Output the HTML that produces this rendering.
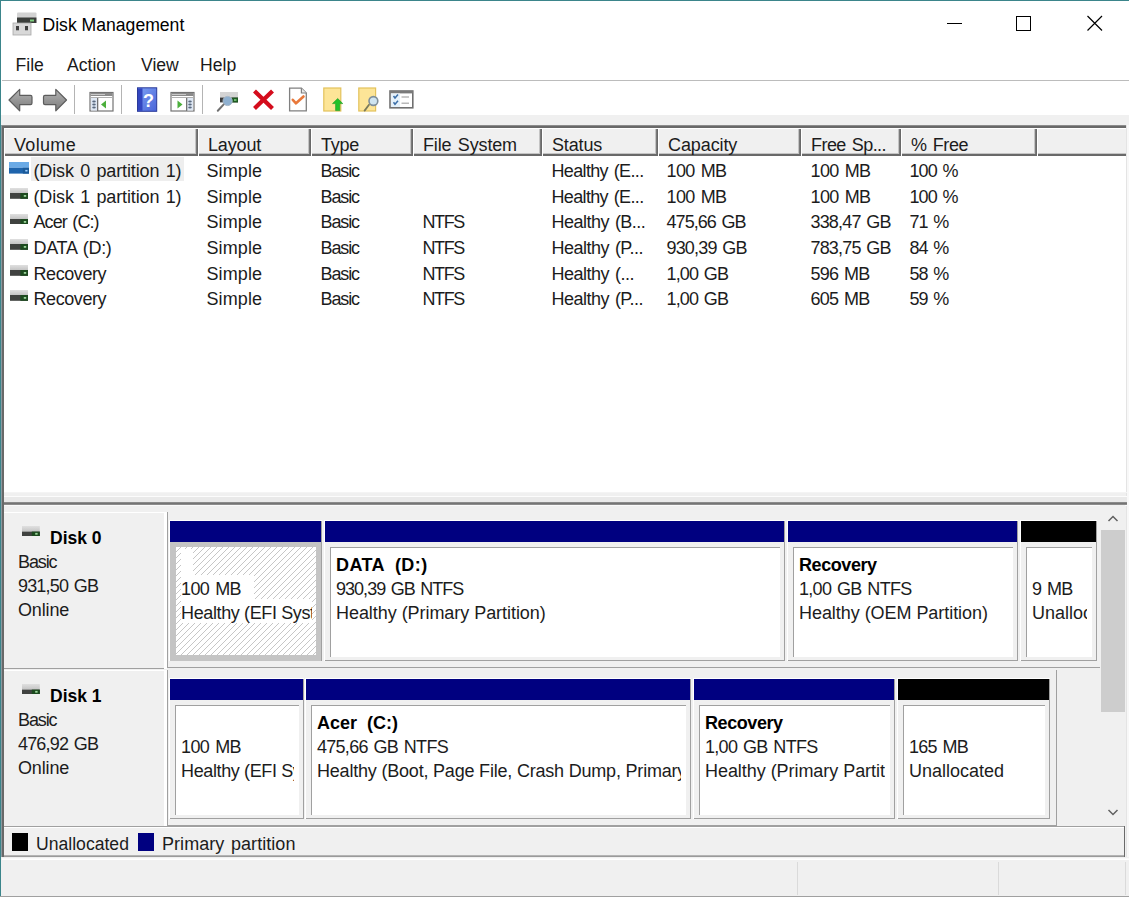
<!DOCTYPE html>
<html><head><meta charset="utf-8">
<style>
*{box-sizing:border-box;margin:0;padding:0}
html,body{width:1129px;height:897px;overflow:hidden;background:#f0f0f0;font-family:"Liberation Sans",sans-serif;color:#000;position:relative}
.a{position:absolute}
.t{position:absolute;white-space:pre;line-height:22px}
.clip{position:absolute;overflow:hidden}
</style></head><body>
<div class="a" style="left:0px;top:0px;width:1129px;height:1px;background:#3b858b;"></div>
<div class="a" style="left:0px;top:0px;width:1px;height:897px;background:#3b858b;"></div>
<div class="a" style="left:1px;top:1px;width:1128px;height:114px;background:#fff;"></div>
<div class="t" style="left:42.5px;top:13.90px;font-size:17.6px;color:#000;letter-spacing:0.000px;word-spacing:0px;">Disk Management</div>
<svg class="a" style="left:940px;top:10px" width="180" height="30"><line x1="7" y1="13.5" x2="22" y2="13.5" stroke="#000" stroke-width="1"/><rect x="76.5" y="6.5" width="14" height="14" fill="none" stroke="#000" stroke-width="1"/><path d="M147.5 6 L162 20.5 M162 6 L147.5 20.5" stroke="#000" stroke-width="1.2"/></svg>
<div class="t" style="left:15.5px;top:53.90px;font-size:17.6px;color:#1a1a1a;letter-spacing:0.000px;word-spacing:0px;">File</div>
<div class="t" style="left:67px;top:53.90px;font-size:17.6px;color:#1a1a1a;letter-spacing:0.000px;word-spacing:0px;">Action</div>
<div class="t" style="left:141px;top:53.90px;font-size:17.6px;color:#1a1a1a;letter-spacing:0.000px;word-spacing:0px;">View</div>
<div class="t" style="left:200px;top:53.90px;font-size:17.6px;color:#1a1a1a;letter-spacing:0.000px;word-spacing:0px;">Help</div>
<div class="a" style="left:2px;top:80px;width:1127px;height:1px;background:#bcbcbc;"></div>
<div class="a" style="left:74px;top:85px;width:1px;height:29px;background:#b4b4b4;"></div>
<div class="a" style="left:121px;top:85px;width:1px;height:29px;background:#b4b4b4;"></div>
<div class="a" style="left:202px;top:85px;width:1px;height:29px;background:#b4b4b4;"></div>
<svg class="a" style="left:0;top:0" width="430" height="120">
<defs>
<linearGradient id="ag" x1="0" y1="0" x2="0" y2="1"><stop offset="0" stop-color="#b4b4b4"/><stop offset="1" stop-color="#7a7a7a"/></linearGradient>
<linearGradient id="hb" x1="0" y1="0" x2="1" y2="1"><stop offset="0" stop-color="#7ea2f4"/><stop offset="1" stop-color="#4a64d8"/></linearGradient>
</defs>
<!-- back -->
<path d="M9 100 L19.7 89.3 L19.7 95.3 L30.5 95.3 Q32 95.3 32 97 L32 103 Q32 104.6 30.5 104.6 L19.7 104.6 L19.7 110.8 Z" fill="url(#ag)" stroke="#5c5c5c" stroke-width="1.2" stroke-linejoin="round"/>
<!-- forward -->
<path d="M66.5 100 L55.8 89.3 L55.8 95.3 L45 95.3 Q43.5 95.3 43.5 97 L43.5 103 Q43.5 104.6 45 104.6 L55.8 104.6 L55.8 110.8 Z" fill="url(#ag)" stroke="#5c5c5c" stroke-width="1.2" stroke-linejoin="round"/>
<!-- console tree -->
<rect x="90" y="92.5" width="23" height="18.5" fill="#fff" stroke="#737373" stroke-width="1.2"/>
<rect x="90.5" y="93" width="22" height="3" fill="#8a8a8a"/>
<rect x="91" y="94" width="14" height="1" fill="#c8c8c8"/>
<rect x="90.5" y="97" width="22" height="1" fill="#b0b0b0"/>
<rect x="91" y="98" width="6" height="12.5" fill="#dfe8f4"/>
<rect x="97" y="98" width="1.3" height="13" fill="#737373"/>
<ellipse cx="94" cy="101.5" rx="1.8" ry="0.9" fill="#5a6a80"/>
<ellipse cx="94" cy="104.5" rx="1.8" ry="0.9" fill="#5a6a80"/>
<ellipse cx="94" cy="107.5" rx="1.8" ry="0.9" fill="#5a6a80"/>
<path d="M101 104.5 L106 100.5 L106 108.5 Z" fill="#4caf3c"/>
<!-- help -->
<rect x="137.5" y="87.8" width="19.2" height="23.5" fill="url(#hb)" stroke="#2a3a9a" stroke-width="1"/>
<rect x="138" y="88.3" width="4.5" height="22.5" fill="#3346c0"/>
<text x="148.5" y="106.5" font-family="Liberation Sans" font-weight="bold" font-size="18" fill="#fff" text-anchor="middle">?</text>
<!-- action pane -->
<rect x="171" y="92.5" width="23" height="18.5" fill="#fff" stroke="#737373" stroke-width="1.2"/>
<rect x="171.5" y="93" width="22" height="3" fill="#8a8a8a"/>
<rect x="172" y="94" width="14" height="1" fill="#c8c8c8"/>
<rect x="171.5" y="97" width="22" height="1" fill="#b0b0b0"/>
<rect x="187" y="98" width="6" height="12.5" fill="#dfe8f4"/>
<rect x="186" y="98" width="1.3" height="13" fill="#737373"/>
<ellipse cx="190" cy="101.5" rx="1.8" ry="0.9" fill="#5a6a80"/>
<ellipse cx="190" cy="104.5" rx="1.8" ry="0.9" fill="#5a6a80"/>
<ellipse cx="190" cy="107.5" rx="1.8" ry="0.9" fill="#5a6a80"/>
<path d="M182.5 104.5 L177.5 100.5 L177.5 108.5 Z" fill="#4caf3c"/>
<!-- disk + magnifier -->
<rect x="220" y="92" width="18" height="6" fill="#d4d4d4"/>
<rect x="220" y="97.6" width="18" height="4.8" fill="#3c3c3c"/>
<rect x="232" y="97.6" width="6" height="4.8" fill="#1f5a22"/>
<rect x="234" y="99.3" width="2.5" height="1.4" fill="#8fe08f"/>
<circle cx="227.6" cy="101" r="4.6" fill="#8eb0d0" stroke="#a8b8c8" stroke-width="1"/>
<line x1="223.5" y1="104.6" x2="217.8" y2="110.8" stroke="#707070" stroke-width="2" stroke-linecap="round"/>
<!-- red X -->
<path d="M254.5 91 L272.5 108.5 M272.5 91 L254.5 108.5" stroke="#d40c1c" stroke-width="4.2"/>
<!-- check doc -->
<path d="M289.6 88.2 L301.4 88.2 L306.3 93 L306.3 110.8 L289.6 110.8 Z" fill="#fff" stroke="#808080" stroke-width="1.3"/>
<path d="M301.4 88.2 L301.4 93 L306.3 93" fill="#e8e8e8" stroke="#808080" stroke-width="1.2"/>
<path d="M292.8 99.8 L296 103.3 L303.5 96.5" fill="none" stroke="#e8783a" stroke-width="2.6" stroke-linecap="round" stroke-linejoin="round"/>
<!-- folder up -->
<rect x="323.8" y="88" width="17" height="23" fill="#fde597" stroke="#e3c25c" stroke-width="1.2"/>
<path d="M337.7 98.5 L342.8 103.6 L339.8 103.6 L339.8 110.6 L335.6 110.6 L335.6 103.6 L332.5 103.6 Z" fill="#22c22a" stroke="#1a9a20" stroke-width="0.6"/>
<!-- folder search -->
<rect x="358.8" y="88" width="16.8" height="23" fill="#fde597" stroke="#e3c25c" stroke-width="1.2"/>
<line x1="369" y1="104.8" x2="364.6" y2="110.6" stroke="#7a7a5a" stroke-width="1.8" stroke-linecap="round"/>
<circle cx="373.4" cy="101" r="4.4" fill="#cfe4f0" stroke="#7f8f9a" stroke-width="1.6"/>
<!-- checklist -->
<rect x="390" y="91" width="22.8" height="16.8" fill="#fff" stroke="#707070" stroke-width="1.6"/>
<rect x="390" y="91" width="22.8" height="2.4" fill="#7a7a7a"/>
<rect x="391" y="93.5" width="9" height="13.5" fill="#e6f2fb"/>
<path d="M393.5 96 L395 98 L398 94.6 M393.5 102.2 L395 104.2 L398 100.8" fill="none" stroke="#3a6ea8" stroke-width="1.5"/>
<rect x="401.5" y="96.4" width="7.5" height="1.2" fill="#a8a8a8"/>
<rect x="401.5" y="102.6" width="7.5" height="1.2" fill="#a8a8a8"/>
<!-- title icon -->
<rect x="17" y="12.5" width="19.5" height="5.5" rx="1" fill="#d2d2d2"/>
<rect x="17" y="17.5" width="19.5" height="5.5" fill="#3a3d3a"/>
<rect x="30" y="19.5" width="4" height="2" fill="#7fd07f"/>
<rect x="13" y="23" width="18" height="12" fill="#d8d8d8" stroke="#a8a8a8" stroke-width="0.8"/>
<rect x="16" y="26" width="3" height="4.3" fill="#404040"/>
<rect x="25" y="26" width="3" height="4.3" fill="#404040"/>
</svg>
<div class="a" style="left:1px;top:125px;width:1126px;height:1px;background:#8c8c8c;"></div>
<div class="a" style="left:2px;top:126px;width:1125px;height:2px;background:#696969;"></div>
<div class="a" style="left:1px;top:125px;width:1px;height:732px;background:#8c9aa0;"></div>
<div class="a" style="left:2px;top:126px;width:2px;height:731px;background:#696969;"></div>
<div class="a" style="left:4px;top:128px;width:1122px;height:364px;background:#fff;"></div>
<div class="a" style="left:1126px;top:125px;width:1px;height:732px;background:#e4e4e4;"></div>
<div class="a" style="left:1127px;top:125px;width:2px;height:732px;background:#f8f8f8;"></div>
<div class="a" style="left:4px;top:128px;width:194px;height:28px;background:#f0f0f0;box-shadow:inset 1px 1px 0 #fff, inset -1px -2px 0 #696969, inset -2px 0 0 #7a7a7a, inset -3px -3px 0 #c4c4c4"></div>
<div class="t" style="left:14px;top:133.76px;font-size:18px;color:#1c1c1c;letter-spacing:0.320px;word-spacing:0px;">Volume</div>
<div class="a" style="left:198px;top:128px;width:113px;height:28px;background:#f0f0f0;box-shadow:inset 1px 1px 0 #fff, inset -1px -2px 0 #696969, inset -2px 0 0 #7a7a7a, inset -3px -3px 0 #c4c4c4"></div>
<div class="t" style="left:208px;top:133.76px;font-size:18px;color:#1c1c1c;letter-spacing:-0.140px;word-spacing:0px;">Layout</div>
<div class="a" style="left:311px;top:128px;width:102px;height:28px;background:#f0f0f0;box-shadow:inset 1px 1px 0 #fff, inset -1px -2px 0 #696969, inset -2px 0 0 #7a7a7a, inset -3px -3px 0 #c4c4c4"></div>
<div class="t" style="left:321px;top:133.76px;font-size:18px;color:#1c1c1c;letter-spacing:-0.233px;word-spacing:0px;">Type</div>
<div class="a" style="left:413px;top:128px;width:129px;height:28px;background:#f0f0f0;box-shadow:inset 1px 1px 0 #fff, inset -1px -2px 0 #696969, inset -2px 0 0 #7a7a7a, inset -3px -3px 0 #c4c4c4"></div>
<div class="t" style="left:423px;top:133.76px;font-size:18px;color:#1c1c1c;letter-spacing:-0.140px;word-spacing:1.5px;">File System</div>
<div class="a" style="left:542px;top:128px;width:116px;height:28px;background:#f0f0f0;box-shadow:inset 1px 1px 0 #fff, inset -1px -2px 0 #696969, inset -2px 0 0 #7a7a7a, inset -3px -3px 0 #c4c4c4"></div>
<div class="t" style="left:552px;top:133.76px;font-size:18px;color:#1c1c1c;letter-spacing:-0.140px;word-spacing:0px;">Status</div>
<div class="a" style="left:658px;top:128px;width:143px;height:28px;background:#f0f0f0;box-shadow:inset 1px 1px 0 #fff, inset -1px -2px 0 #696969, inset -2px 0 0 #7a7a7a, inset -3px -3px 0 #c4c4c4"></div>
<div class="t" style="left:668px;top:133.76px;font-size:18px;color:#1c1c1c;letter-spacing:-0.100px;word-spacing:0px;">Capacity</div>
<div class="a" style="left:801px;top:128px;width:100px;height:28px;background:#f0f0f0;box-shadow:inset 1px 1px 0 #fff, inset -1px -2px 0 #696969, inset -2px 0 0 #7a7a7a, inset -3px -3px 0 #c4c4c4"></div>
<div class="t" style="left:811px;top:133.76px;font-size:18px;color:#1c1c1c;letter-spacing:-0.556px;word-spacing:1.5px;">Free Sp...</div>
<div class="a" style="left:901px;top:128px;width:136px;height:28px;background:#f0f0f0;box-shadow:inset 1px 1px 0 #fff, inset -1px -2px 0 #696969, inset -2px 0 0 #7a7a7a, inset -3px -3px 0 #c4c4c4"></div>
<div class="t" style="left:911px;top:133.76px;font-size:18px;color:#1c1c1c;letter-spacing:-0.380px;word-spacing:1.5px;">% Free</div>
<div class="a" style="left:1037px;top:128px;width:89px;height:28px;background:#f0f0f0;box-shadow:inset 1px 1px 0 #fff, inset 0 -2px 0 #696969, inset 0 -3px 0 #c4c4c4"></div>
<div class="a" style="left:31px;top:157px;width:153px;height:24px;background:#eeeeee;"></div>
<div class="t" style="left:33.5px;top:159.76px;font-size:18px;color:#1c1c1c;letter-spacing:-0.132px;word-spacing:1.5px;">(Disk 0 partition 1)</div>
<div class="t" style="left:206.5px;top:159.76px;font-size:18px;color:#1c1c1c;letter-spacing:0.100px;word-spacing:0px;">Simple</div>
<div class="t" style="left:320.5px;top:159.76px;font-size:18px;color:#1c1c1c;letter-spacing:-1.125px;word-spacing:0px;">Basic</div>
<div class="t" style="left:551.5px;top:159.76px;font-size:18px;color:#1c1c1c;letter-spacing:-0.658px;word-spacing:1.5px;">Healthy (E...</div>
<div class="t" style="left:666.5px;top:159.76px;font-size:18px;color:#1c1c1c;letter-spacing:-0.600px;word-spacing:1.5px;">100 MB</div>
<div class="t" style="left:810.5px;top:159.76px;font-size:18px;color:#1c1c1c;letter-spacing:-0.600px;word-spacing:1.5px;">100 MB</div>
<div class="t" style="left:909.5px;top:159.76px;font-size:18px;color:#1c1c1c;letter-spacing:-0.900px;word-spacing:1.5px;">100 %</div>
<svg class="a" style="left:8.6px;top:162.4px" width="20.8" height="11.6"><rect x="0" y="0" width="20.8" height="5.8" fill="#6aaae6"/><rect x="0" y="5.8" width="20.8" height="5.8" fill="#1e64ac"/><rect x="13.8" y="5.8" width="7" height="5.8" fill="#1a5a9a"/><rect x="16.3" y="7.8999999999999995" width="2.2" height="1.6" fill="#9fd0ff"/></svg>
<div class="t" style="left:33.5px;top:185.76px;font-size:18px;color:#1c1c1c;letter-spacing:-0.132px;word-spacing:1.5px;">(Disk 1 partition 1)</div>
<div class="t" style="left:206.5px;top:185.76px;font-size:18px;color:#1c1c1c;letter-spacing:0.100px;word-spacing:0px;">Simple</div>
<div class="t" style="left:320.5px;top:185.76px;font-size:18px;color:#1c1c1c;letter-spacing:-1.125px;word-spacing:0px;">Basic</div>
<div class="t" style="left:551.5px;top:185.76px;font-size:18px;color:#1c1c1c;letter-spacing:-0.658px;word-spacing:1.5px;">Healthy (E...</div>
<div class="t" style="left:666.5px;top:185.76px;font-size:18px;color:#1c1c1c;letter-spacing:-0.600px;word-spacing:1.5px;">100 MB</div>
<div class="t" style="left:810.5px;top:185.76px;font-size:18px;color:#1c1c1c;letter-spacing:-0.600px;word-spacing:1.5px;">100 MB</div>
<div class="t" style="left:909.5px;top:185.76px;font-size:18px;color:#1c1c1c;letter-spacing:-0.900px;word-spacing:1.5px;">100 %</div>
<svg class="a" style="left:9.8px;top:188.0px" width="18.4" height="10.8"><defs><linearGradient id="dg" x1="0" y1="0" x2="0" y2="1"><stop offset="0" stop-color="#e0e0e0"/><stop offset="1" stop-color="#c4c4c4"/></linearGradient></defs><rect x="0" y="0" width="18.4" height="5" fill="url(#dg)"/><rect x="0" y="5" width="18.4" height="5.8" fill="#404240"/><rect x="10.399999999999999" y="5" width="8" height="5.8" fill="#1c4a1e"/><rect x="13.799999999999999" y="7.0" width="2.4" height="1.8" fill="#9ad49a"/></svg>
<div class="t" style="left:33.5px;top:210.76px;font-size:18px;color:#1c1c1c;letter-spacing:-0.938px;word-spacing:1.5px;">Acer (C:)</div>
<div class="t" style="left:206.5px;top:210.76px;font-size:18px;color:#1c1c1c;letter-spacing:0.100px;word-spacing:0px;">Simple</div>
<div class="t" style="left:320.5px;top:210.76px;font-size:18px;color:#1c1c1c;letter-spacing:-1.125px;word-spacing:0px;">Basic</div>
<div class="t" style="left:422.5px;top:210.76px;font-size:18px;color:#1c1c1c;letter-spacing:-1.433px;word-spacing:0px;">NTFS</div>
<div class="t" style="left:551.5px;top:210.76px;font-size:18px;color:#1c1c1c;letter-spacing:-0.517px;word-spacing:1.5px;">Healthy (B...</div>
<div class="t" style="left:666.5px;top:210.76px;font-size:18px;color:#1c1c1c;letter-spacing:-0.938px;word-spacing:1.5px;">475,66 GB</div>
<div class="t" style="left:810.5px;top:210.76px;font-size:18px;color:#1c1c1c;letter-spacing:-0.825px;word-spacing:1.5px;">338,47 GB</div>
<div class="t" style="left:909.5px;top:210.76px;font-size:18px;color:#1c1c1c;letter-spacing:-0.933px;word-spacing:1.5px;">71 %</div>
<svg class="a" style="left:9.8px;top:213.6px" width="18.4" height="10.8"><defs><linearGradient id="dg" x1="0" y1="0" x2="0" y2="1"><stop offset="0" stop-color="#e0e0e0"/><stop offset="1" stop-color="#c4c4c4"/></linearGradient></defs><rect x="0" y="0" width="18.4" height="5" fill="url(#dg)"/><rect x="0" y="5" width="18.4" height="5.8" fill="#404240"/><rect x="10.399999999999999" y="5" width="8" height="5.8" fill="#1c4a1e"/><rect x="13.799999999999999" y="7.0" width="2.4" height="1.8" fill="#9ad49a"/></svg>
<div class="t" style="left:33.5px;top:236.76px;font-size:18px;color:#1c1c1c;letter-spacing:-0.312px;word-spacing:1.5px;">DATA (D:)</div>
<div class="t" style="left:206.5px;top:236.76px;font-size:18px;color:#1c1c1c;letter-spacing:0.100px;word-spacing:0px;">Simple</div>
<div class="t" style="left:320.5px;top:236.76px;font-size:18px;color:#1c1c1c;letter-spacing:-1.125px;word-spacing:0px;">Basic</div>
<div class="t" style="left:422.5px;top:236.76px;font-size:18px;color:#1c1c1c;letter-spacing:-1.433px;word-spacing:0px;">NTFS</div>
<div class="t" style="left:551.5px;top:236.76px;font-size:18px;color:#1c1c1c;letter-spacing:-0.517px;word-spacing:1.5px;">Healthy (P...</div>
<div class="t" style="left:666.5px;top:236.76px;font-size:18px;color:#1c1c1c;letter-spacing:-0.825px;word-spacing:1.5px;">930,39 GB</div>
<div class="t" style="left:810.5px;top:236.76px;font-size:18px;color:#1c1c1c;letter-spacing:-0.825px;word-spacing:1.5px;">783,75 GB</div>
<div class="t" style="left:909.5px;top:236.76px;font-size:18px;color:#1c1c1c;letter-spacing:-0.933px;word-spacing:1.5px;">84 %</div>
<svg class="a" style="left:9.8px;top:239.2px" width="18.4" height="10.8"><defs><linearGradient id="dg" x1="0" y1="0" x2="0" y2="1"><stop offset="0" stop-color="#e0e0e0"/><stop offset="1" stop-color="#c4c4c4"/></linearGradient></defs><rect x="0" y="0" width="18.4" height="5" fill="url(#dg)"/><rect x="0" y="5" width="18.4" height="5.8" fill="#404240"/><rect x="10.399999999999999" y="5" width="8" height="5.8" fill="#1c4a1e"/><rect x="13.799999999999999" y="7.0" width="2.4" height="1.8" fill="#9ad49a"/></svg>
<div class="t" style="left:33.5px;top:262.76px;font-size:18px;color:#1c1c1c;letter-spacing:-0.429px;word-spacing:0px;">Recovery</div>
<div class="t" style="left:206.5px;top:262.76px;font-size:18px;color:#1c1c1c;letter-spacing:0.100px;word-spacing:0px;">Simple</div>
<div class="t" style="left:320.5px;top:262.76px;font-size:18px;color:#1c1c1c;letter-spacing:-1.125px;word-spacing:0px;">Basic</div>
<div class="t" style="left:422.5px;top:262.76px;font-size:18px;color:#1c1c1c;letter-spacing:-1.433px;word-spacing:0px;">NTFS</div>
<div class="t" style="left:551.5px;top:262.76px;font-size:18px;color:#1c1c1c;letter-spacing:-0.500px;word-spacing:1.5px;">Healthy (...</div>
<div class="t" style="left:666.5px;top:262.76px;font-size:18px;color:#1c1c1c;letter-spacing:-0.833px;word-spacing:1.5px;">1,00 GB</div>
<div class="t" style="left:810.5px;top:262.76px;font-size:18px;color:#1c1c1c;letter-spacing:-0.760px;word-spacing:1.5px;">596 MB</div>
<div class="t" style="left:909.5px;top:262.76px;font-size:18px;color:#1c1c1c;letter-spacing:-0.933px;word-spacing:1.5px;">58 %</div>
<svg class="a" style="left:9.8px;top:264.8px" width="18.4" height="10.8"><defs><linearGradient id="dg" x1="0" y1="0" x2="0" y2="1"><stop offset="0" stop-color="#e0e0e0"/><stop offset="1" stop-color="#c4c4c4"/></linearGradient></defs><rect x="0" y="0" width="18.4" height="5" fill="url(#dg)"/><rect x="0" y="5" width="18.4" height="5.8" fill="#404240"/><rect x="10.399999999999999" y="5" width="8" height="5.8" fill="#1c4a1e"/><rect x="13.799999999999999" y="7.0" width="2.4" height="1.8" fill="#9ad49a"/></svg>
<div class="t" style="left:33.5px;top:287.76px;font-size:18px;color:#1c1c1c;letter-spacing:-0.429px;word-spacing:0px;">Recovery</div>
<div class="t" style="left:206.5px;top:287.76px;font-size:18px;color:#1c1c1c;letter-spacing:0.100px;word-spacing:0px;">Simple</div>
<div class="t" style="left:320.5px;top:287.76px;font-size:18px;color:#1c1c1c;letter-spacing:-1.125px;word-spacing:0px;">Basic</div>
<div class="t" style="left:422.5px;top:287.76px;font-size:18px;color:#1c1c1c;letter-spacing:-1.433px;word-spacing:0px;">NTFS</div>
<div class="t" style="left:551.5px;top:287.76px;font-size:18px;color:#1c1c1c;letter-spacing:-0.517px;word-spacing:1.5px;">Healthy (P...</div>
<div class="t" style="left:666.5px;top:287.76px;font-size:18px;color:#1c1c1c;letter-spacing:-0.833px;word-spacing:1.5px;">1,00 GB</div>
<div class="t" style="left:810.5px;top:287.76px;font-size:18px;color:#1c1c1c;letter-spacing:-0.760px;word-spacing:1.5px;">605 MB</div>
<div class="t" style="left:909.5px;top:287.76px;font-size:18px;color:#1c1c1c;letter-spacing:-0.933px;word-spacing:1.5px;">59 %</div>
<svg class="a" style="left:9.8px;top:290.4px" width="18.4" height="10.8"><defs><linearGradient id="dg" x1="0" y1="0" x2="0" y2="1"><stop offset="0" stop-color="#e0e0e0"/><stop offset="1" stop-color="#c4c4c4"/></linearGradient></defs><rect x="0" y="0" width="18.4" height="5" fill="url(#dg)"/><rect x="0" y="5" width="18.4" height="5.8" fill="#404240"/><rect x="10.399999999999999" y="5" width="8" height="5.8" fill="#1c4a1e"/><rect x="13.799999999999999" y="7.0" width="2.4" height="1.8" fill="#9ad49a"/></svg>
<div class="a" style="left:4px;top:492px;width:1123px;height:1px;background:#f4f4f4;"></div>
<div class="a" style="left:4px;top:496px;width:1123px;height:1px;background:#fcfcfc;"></div>
<div class="a" style="left:4px;top:497px;width:1123px;height:5px;background:#e9e9e9;"></div>
<div class="a" style="left:4px;top:502px;width:1123px;height:1px;background:#8a8a8a;"></div>
<div class="a" style="left:4px;top:503px;width:1123px;height:1px;background:#747474;"></div>
<div class="a" style="left:4px;top:504px;width:1123px;height:1px;background:#8c8c8c;"></div>
<div class="a" style="left:4px;top:505px;width:1123px;height:1px;background:#fafafa;"></div>
<div class="a" style="left:4px;top:512px;width:163px;height:157px;background:#f0f0f0;box-shadow:inset 0 1px 0 #fff, inset -3px 0 0 #fff, inset 0 -1px 0 #a0a0a0"></div>
<svg class="a" style="left:22.2px;top:526.1px" width="17.8" height="10.0"><defs><linearGradient id="dg" x1="0" y1="0" x2="0" y2="1"><stop offset="0" stop-color="#e0e0e0"/><stop offset="1" stop-color="#c4c4c4"/></linearGradient></defs><rect x="0" y="0" width="17.8" height="5.6" fill="url(#dg)"/><rect x="0" y="5.6" width="17.8" height="4.4" fill="#404240"/><rect x="9.8" y="5.6" width="8" height="4.4" fill="#1c4a1e"/><rect x="13.200000000000001" y="6.8999999999999995" width="2.4" height="1.8" fill="#9ad49a"/></svg>
<div class="t" style="left:50px;top:526.94px;font-size:17.5px;font-weight:bold;color:#000;letter-spacing:0.000px;word-spacing:0px;">Disk 0</div>
<div class="t" style="left:18px;top:550.76px;font-size:18px;color:#1c1c1c;letter-spacing:-1.125px;word-spacing:0px;">Basic</div>
<div class="t" style="left:18px;top:574.76px;font-size:18px;color:#1c1c1c;letter-spacing:-0.825px;word-spacing:1.5px;">931,50 GB</div>
<div class="t" style="left:18px;top:598.76px;font-size:18px;color:#1c1c1c;letter-spacing:-0.140px;word-spacing:0px;">Online</div>
<div class="a" style="left:167px;top:512px;width:1px;height:156px;background:#a0a0a0;"></div>
<div class="a" style="left:168px;top:667px;width:932px;height:1px;background:#a0a0a0;"></div>
<div class="a" style="left:169px;top:520px;width:153px;height:141px;background:#f0f0f0;box-shadow:inset 1px 1px 0 #fff, inset -1px -1px 0 #a0a0a0"></div>
<div class="a" style="left:170px;top:521px;width:151px;height:21px;background:#000080;"></div>
<div class="a" style="left:170px;top:542px;width:151px;height:119px;background:#c4c4c4;"></div>
<div class="a" style="left:176px;top:547px;width:140px;height:108px;background:repeating-linear-gradient(135deg,#fff 0 3.1px,#c6c6c6 3.1px 4.24px)"></div>
<div class="clip" style="left:175px;top:547px;width:137px;height:108px"><div class="a" style="left:6px;top:2px;width:12px;height:26px;background:#fff;"></div>
<div class="a" style="left:6px;top:28px;width:73px;height:24px;background:#fff;"></div>
<div class="a" style="left:6px;top:52px;width:138px;height:24px;background:#fff;"></div>
<div class="t" style="left:6px;top:30.96px;font-size:18px;color:#1c1c1c;letter-spacing:-0.600px;word-spacing:1.5px;">100 MB</div>
<div class="t" style="left:6px;top:54.66px;font-size:18px;color:#1c1c1c;letter-spacing:-0.370px;word-spacing:0px;">Healthy (EFI System Partition)</div>
</div>
<div class="a" style="left:324px;top:520px;width:461px;height:141px;background:#f0f0f0;box-shadow:inset 1px 1px 0 #fff, inset -1px -1px 0 #a0a0a0"></div>
<div class="a" style="left:325px;top:521px;width:459px;height:21px;background:#000080;"></div>
<div class="a" style="left:330px;top:547px;width:450px;height:110px;background:#fff;box-shadow:inset 1px 1px 0 #a0a0a0"></div>
<div class="clip" style="left:330px;top:547px;width:445px;height:108px"><div class="t" style="left:6px;top:7.26px;font-size:18px;font-weight:bold;color:#000;letter-spacing:0.389px;word-spacing:0px;">DATA  (D:)</div>
<div class="t" style="left:6px;top:30.96px;font-size:18px;color:#1c1c1c;letter-spacing:-0.977px;word-spacing:1.5px;">930,39 GB NTFS</div>
<div class="t" style="left:6px;top:54.66px;font-size:18px;color:#1c1c1c;letter-spacing:-0.050px;word-spacing:0px;">Healthy (Primary Partition)</div>
</div>
<div class="a" style="left:787px;top:520px;width:231px;height:141px;background:#f0f0f0;box-shadow:inset 1px 1px 0 #fff, inset -1px -1px 0 #a0a0a0"></div>
<div class="a" style="left:788px;top:521px;width:229px;height:21px;background:#000080;"></div>
<div class="a" style="left:793px;top:547px;width:220px;height:110px;background:#fff;box-shadow:inset 1px 1px 0 #a0a0a0"></div>
<div class="clip" style="left:793px;top:547px;width:215px;height:108px"><div class="t" style="left:6px;top:7.26px;font-size:18px;font-weight:bold;color:#000;letter-spacing:-0.429px;word-spacing:0px;">Recovery</div>
<div class="t" style="left:6px;top:30.96px;font-size:18px;color:#1c1c1c;letter-spacing:-0.709px;word-spacing:1.5px;">1,00 GB NTFS</div>
<div class="t" style="left:6px;top:54.66px;font-size:18px;color:#1c1c1c;letter-spacing:-0.050px;word-spacing:0px;">Healthy (OEM Partition)</div>
</div>
<div class="a" style="left:1020px;top:520px;width:77px;height:141px;background:#f0f0f0;box-shadow:inset 1px 1px 0 #fff, inset -1px -1px 0 #a0a0a0"></div>
<div class="a" style="left:1021px;top:521px;width:75px;height:21px;background:#000000;"></div>
<div class="a" style="left:1026px;top:547px;width:66px;height:110px;background:#fff;box-shadow:inset 1px 1px 0 #a0a0a0"></div>
<div class="clip" style="left:1026px;top:547px;width:61px;height:108px"><div class="t" style="left:6px;top:30.96px;font-size:18px;color:#1c1c1c;letter-spacing:-0.733px;word-spacing:1.5px;">9 MB</div>
<div class="t" style="left:6px;top:54.66px;font-size:18px;color:#1c1c1c;letter-spacing:0.000px;word-spacing:0px;">Unallocated</div>
</div>
<div class="a" style="left:4px;top:670px;width:163px;height:157px;background:#f0f0f0;box-shadow:inset 0 1px 0 #fff, inset -3px 0 0 #fff, inset 0 -1px 0 #a0a0a0"></div>
<svg class="a" style="left:22.2px;top:684.1px" width="17.8" height="10.0"><defs><linearGradient id="dg" x1="0" y1="0" x2="0" y2="1"><stop offset="0" stop-color="#e0e0e0"/><stop offset="1" stop-color="#c4c4c4"/></linearGradient></defs><rect x="0" y="0" width="17.8" height="5.6" fill="url(#dg)"/><rect x="0" y="5.6" width="17.8" height="4.4" fill="#404240"/><rect x="9.8" y="5.6" width="8" height="4.4" fill="#1c4a1e"/><rect x="13.200000000000001" y="6.8999999999999995" width="2.4" height="1.8" fill="#9ad49a"/></svg>
<div class="t" style="left:50px;top:684.94px;font-size:17.5px;font-weight:bold;color:#000;letter-spacing:0.000px;word-spacing:0px;">Disk 1</div>
<div class="t" style="left:18px;top:708.76px;font-size:18px;color:#1c1c1c;letter-spacing:-1.125px;word-spacing:0px;">Basic</div>
<div class="t" style="left:18px;top:732.76px;font-size:18px;color:#1c1c1c;letter-spacing:-0.825px;word-spacing:1.5px;">476,92 GB</div>
<div class="t" style="left:18px;top:756.76px;font-size:18px;color:#1c1c1c;letter-spacing:-0.140px;word-spacing:0px;">Online</div>
<div class="a" style="left:167px;top:670px;width:1px;height:156px;background:#a0a0a0;"></div>
<div class="a" style="left:168px;top:825px;width:889px;height:1px;background:#a0a0a0;"></div>
<div class="a" style="left:1056px;top:670px;width:1px;height:156px;background:#a0a0a0;"></div>
<div class="a" style="left:169px;top:678px;width:135px;height:141px;background:#f0f0f0;box-shadow:inset 1px 1px 0 #fff, inset -1px -1px 0 #a0a0a0"></div>
<div class="a" style="left:170px;top:679px;width:133px;height:21px;background:#000080;"></div>
<div class="a" style="left:175px;top:705px;width:124px;height:110px;background:#fff;box-shadow:inset 1px 1px 0 #a0a0a0"></div>
<div class="clip" style="left:175px;top:705px;width:119px;height:108px"><div class="t" style="left:6px;top:30.96px;font-size:18px;color:#1c1c1c;letter-spacing:-0.600px;word-spacing:1.5px;">100 MB</div>
<div class="t" style="left:6px;top:54.66px;font-size:18px;color:#1c1c1c;letter-spacing:-0.370px;word-spacing:0px;">Healthy (EFI System Partition)</div>
</div>
<div class="a" style="left:305px;top:678px;width:386px;height:141px;background:#f0f0f0;box-shadow:inset 1px 1px 0 #fff, inset -1px -1px 0 #a0a0a0"></div>
<div class="a" style="left:306px;top:679px;width:384px;height:21px;background:#000080;"></div>
<div class="a" style="left:311px;top:705px;width:375px;height:110px;background:#fff;box-shadow:inset 1px 1px 0 #a0a0a0"></div>
<div class="clip" style="left:311px;top:705px;width:370px;height:108px"><div class="t" style="left:6px;top:7.26px;font-size:18px;font-weight:bold;color:#000;letter-spacing:0.000px;word-spacing:0px;">Acer  (C:)</div>
<div class="t" style="left:6px;top:30.96px;font-size:18px;color:#1c1c1c;letter-spacing:-0.723px;word-spacing:1.5px;">475,66 GB NTFS</div>
<div class="t" style="left:6px;top:54.66px;font-size:18px;color:#1c1c1c;letter-spacing:-0.200px;word-spacing:0px;">Healthy (Boot, Page File, Crash Dump, Primary Partition)</div>
</div>
<div class="a" style="left:693px;top:678px;width:202px;height:141px;background:#f0f0f0;box-shadow:inset 1px 1px 0 #fff, inset -1px -1px 0 #a0a0a0"></div>
<div class="a" style="left:694px;top:679px;width:200px;height:21px;background:#000080;"></div>
<div class="a" style="left:699px;top:705px;width:191px;height:110px;background:#fff;box-shadow:inset 1px 1px 0 #a0a0a0"></div>
<div class="clip" style="left:699px;top:705px;width:186px;height:108px"><div class="t" style="left:6px;top:7.26px;font-size:18px;font-weight:bold;color:#000;letter-spacing:-0.429px;word-spacing:0px;">Recovery</div>
<div class="t" style="left:6px;top:30.96px;font-size:18px;color:#1c1c1c;letter-spacing:-0.709px;word-spacing:1.5px;">1,00 GB NTFS</div>
<div class="t" style="left:6px;top:54.66px;font-size:18px;color:#1c1c1c;letter-spacing:-0.050px;word-spacing:0px;">Healthy (Primary Partition)</div>
</div>
<div class="a" style="left:897px;top:678px;width:153px;height:141px;background:#f0f0f0;box-shadow:inset 1px 1px 0 #fff, inset -1px -1px 0 #a0a0a0"></div>
<div class="a" style="left:898px;top:679px;width:151px;height:21px;background:#000000;"></div>
<div class="a" style="left:903px;top:705px;width:142px;height:110px;background:#fff;box-shadow:inset 1px 1px 0 #a0a0a0"></div>
<div class="clip" style="left:903px;top:705px;width:137px;height:108px"><div class="t" style="left:6px;top:30.96px;font-size:18px;color:#1c1c1c;letter-spacing:-0.760px;word-spacing:1.5px;">165 MB</div>
<div class="t" style="left:6px;top:54.66px;font-size:18px;color:#1c1c1c;letter-spacing:0.000px;word-spacing:0px;">Unallocated</div>
</div>
<div class="a" style="left:1100px;top:505px;width:25px;height:321px;background:#f0f0f0;"></div>
<div class="a" style="left:1101px;top:530px;width:24px;height:182px;background:#cdcdcd;"></div>
<svg class="a" style="left:1101px;top:505px" width="24" height="320"><path d="M7.5 16 L12 11.5 L16.5 16" fill="none" stroke="#606060" stroke-width="1.5"/><path d="M7.5 305 L12 309.5 L16.5 305" fill="none" stroke="#606060" stroke-width="1.5"/></svg>
<div class="a" style="left:4px;top:826px;width:1121px;height:1px;background:#a0a0a0;"></div>
<div class="a" style="left:4px;top:827px;width:1121px;height:1px;background:#ffffff;"></div>
<div class="a" style="left:4px;top:855px;width:1121px;height:1px;background:#b4b4b4;"></div>
<div class="a" style="left:4px;top:856px;width:1121px;height:1px;background:#9a9a9a;"></div>
<div class="a" style="left:1124px;top:826px;width:1px;height:31px;background:#696969;"></div>
<div class="a" style="left:12px;top:833px;width:16px;height:18px;background:#000;"></div>
<div class="t" style="left:36px;top:832.90px;font-size:17.6px;color:#1c1c1c;letter-spacing:0.000px;word-spacing:0px;">Unallocated</div>
<div class="a" style="left:138px;top:833px;width:16px;height:18px;background:#000080;"></div>
<div class="t" style="left:162px;top:832.76px;font-size:18px;color:#1c1c1c;letter-spacing:0.056px;word-spacing:1.5px;">Primary partition</div>
<div class="a" style="left:2px;top:858px;width:1127px;height:1px;background:#fafafa;"></div>
<div class="a" style="left:2px;top:859px;width:1127px;height:1px;background:#fff;"></div>
<div class="a" style="left:797px;top:862px;width:1px;height:33px;background:#dadada;"></div>
<div class="a" style="left:998px;top:862px;width:1px;height:33px;background:#dadada;"></div>
<div class="a" style="left:1125px;top:862px;width:1px;height:33px;background:#dadada;"></div>
<div class="a" style="left:0px;top:896px;width:1129px;height:1px;background:#a0a0a0;"></div>
</body></html>
